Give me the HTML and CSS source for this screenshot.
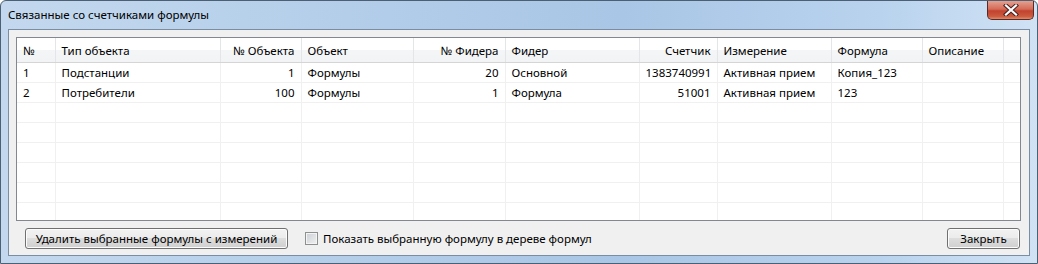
FILE: index.html
```html
<!DOCTYPE html>
<html lang="ru">
<head>
    <meta charset="UTF-8">
    <title>Связанные со счетчиками формулы</title>
    <link rel="stylesheet" href="styles.css">
</head>
<body>
    <div class="window">
        <div class="titlebar">
            <span class="title">Связанные со счетчиками формулы</span>
            <div class="close-btn">
                <svg width="16" height="12" viewBox="0 0 16 12">
                    <path d="M3 1.5 L13 10.5 M13 1.5 L3 10.5" stroke="#4a2020" stroke-width="4.2" stroke-linecap="square"/>
                    <path d="M3 1.5 L13 10.5 M13 1.5 L3 10.5" stroke="#ffffff" stroke-width="2.2" stroke-linecap="square"/>
                </svg>
            </div>
        </div>

        <div class="client">
            <div class="grid">
                <table>
                    <colgroup>
                        <col style="width:38px">
                        <col style="width:165px">
                        <col style="width:81px">
                        <col style="width:112px">
                        <col style="width:92px">
                        <col style="width:134px">
                        <col style="width:78px">
                        <col style="width:114px">
                        <col style="width:91px">
                        <col style="width:81px">
                        <col>
                    </colgroup>
                    <thead>
                        <tr>
                            <th>№</th>
                            <th>Тип объекта</th>
                            <th class="num">№ Объекта</th>
                            <th>Объект</th>
                            <th class="num">№ Фидера</th>
                            <th>Фидер</th>
                            <th class="num">Счетчик</th>
                            <th>Измерение</th>
                            <th>Формула</th>
                            <th>Описание</th>
                            <th class="filler"></th>
                        </tr>
                    </thead>
                    <tbody>
                        <tr>
                            <td>1</td>
                            <td>Подстанции</td>
                            <td class="num">1</td>
                            <td>Формулы</td>
                            <td class="num">20</td>
                            <td>Основной</td>
                            <td class="num">1383740991</td>
                            <td>Активная прием</td>
                            <td>Копия_123</td>
                            <td></td>
                            <td class="filler"></td>
                        </tr>
                        <tr>
                            <td>2</td>
                            <td>Потребители</td>
                            <td class="num">100</td>
                            <td>Формулы</td>
                            <td class="num">1</td>
                            <td>Формула</td>
                            <td class="num">51001</td>
                            <td>Активная прием</td>
                            <td>123</td>
                            <td></td>
                            <td class="filler"></td>
                        </tr>
                        <!-- empty rows to fill the grid -->
                        <tr class="empty"><td></td><td></td><td></td><td></td><td></td><td></td><td></td><td></td><td></td><td></td><td class="filler"></td></tr>
                        <tr class="empty"><td></td><td></td><td></td><td></td><td></td><td></td><td></td><td></td><td></td><td></td><td class="filler"></td></tr>
                        <tr class="empty"><td></td><td></td><td></td><td></td><td></td><td></td><td></td><td></td><td></td><td></td><td class="filler"></td></tr>
                        <tr class="empty"><td></td><td></td><td></td><td></td><td></td><td></td><td></td><td></td><td></td><td></td><td class="filler"></td></tr>
                        <tr class="empty"><td></td><td></td><td></td><td></td><td></td><td></td><td></td><td></td><td></td><td></td><td class="filler"></td></tr>
                        <tr class="empty"><td></td><td></td><td></td><td></td><td></td><td></td><td></td><td></td><td></td><td></td><td class="filler"></td></tr>
                        <tr class="empty"><td></td><td></td><td></td><td></td><td></td><td></td><td></td><td></td><td></td><td></td><td class="filler"></td></tr>
                    </tbody>
                </table>
            </div>

            <div class="footer">
                <button class="btn btn-delete">Удалить выбранные формулы с измерений</button>
                <label class="check">
                    <span class="box"></span>
                    Показать выбранную формулу в дереве формул
                </label>
                <button class="btn btn-close">Закрыть</button>
            </div>
        </div>
    </div>
</body>
</html>
```

FILE: styles.css
```css
body {
    margin: 0;
    font-family: "Noto Sans", "Liberation Sans", sans-serif;
    font-size: 11.5px;
    color: #000;
    background: #fff;
}
.window {
    width: 1038px;
    height: 264px;
    box-sizing: border-box;
    padding: 0 7px 7px 7px;
    display: flex;
    flex-direction: column;
    border: 1px solid #4d5f72;
    border-radius: 6px 6px 0 0;
    background: linear-gradient(90deg, #c3d8ee 0%, #b5cfea 30%, #a9c6e6 60%, #b9d3ee 85%, #d0e2f4 100%);
}
.titlebar {
    height: 28px;
    display: flex;
    align-items: flex-start;
    justify-content: space-between;
}
.title {
    margin-top: 6px;
    color: #000;
}
.close-btn {
    width: 47px;
    height: 19px;
    margin-right: -4px;
    box-sizing: border-box;
    border: 1px solid #5a2a24;
    border-top: none;
    border-radius: 0 0 5px 5px;
    background: linear-gradient(#e4a090 0%, #d46b57 45%, #c2432e 55%, #cc5a3e 85%, #e08a6a 100%);
    display: flex;
    align-items: center;
    justify-content: center;
}
.client {
    flex: 1;
    display: flex;
    flex-direction: column;
    border: 1px solid #7b8da3;
    background: #f0f0f0;
    padding: 7px 8px 6px 7px;
}
.grid {
    height: 182px;
    border: 1px solid #828790;
    background: #fff;
    overflow: hidden;
}
table {
    width: 100%;
    border-collapse: collapse;
    table-layout: fixed;
}
th {
    height: 24px;
    padding: 0 6px;
    font-weight: normal;
    text-align: left;
    white-space: nowrap;
    border-right: 1px solid #e3e5e8;
    border-bottom: 1px solid #d5d5d5;
    background: linear-gradient(#ffffff 0%, #ffffff 50%, #f4f5f7 50%, #f2f3f5 100%);
}
td {
    height: 19px;
    padding: 0 6px;
    white-space: nowrap;
    overflow: hidden;
    border-right: 1px solid #f0f0f0;
    border-bottom: 1px solid #f0f0f0;
}
.num {
    text-align: right;
}
.filler {
    border-right: none;
}
.footer {
    margin-top: 7px;
    display: flex;
    align-items: center;
    padding-left: 9px;
}
.btn {
    height: 21px;
    padding: 0;
    font-family: inherit;
    font-size: 11.5px;
    color: #000;
    white-space: nowrap;
    border: 1px solid #707070;
    border-radius: 3px;
    background: linear-gradient(#f2f2f2 0%, #ebebeb 50%, #dddddd 50%, #cfcfcf 100%);
    box-shadow: inset 0 0 0 1px #fcfcfc;
}
.btn-delete {
    width: 263px;
}
.btn-close {
    width: 73px;
    margin-left: auto;
    margin-right: 1px;
}
.check {
    margin-left: 17px;
    display: flex;
    align-items: center;
    gap: 5px;
}
.box {
    width: 11px;
    height: 11px;
    border: 1px solid #8e8f8f;
    background: linear-gradient(135deg, #cbcfd5 0%, #f0f0f0 100%);
    box-shadow: inset 0 0 0 1px #f4f4f4;
}
```
